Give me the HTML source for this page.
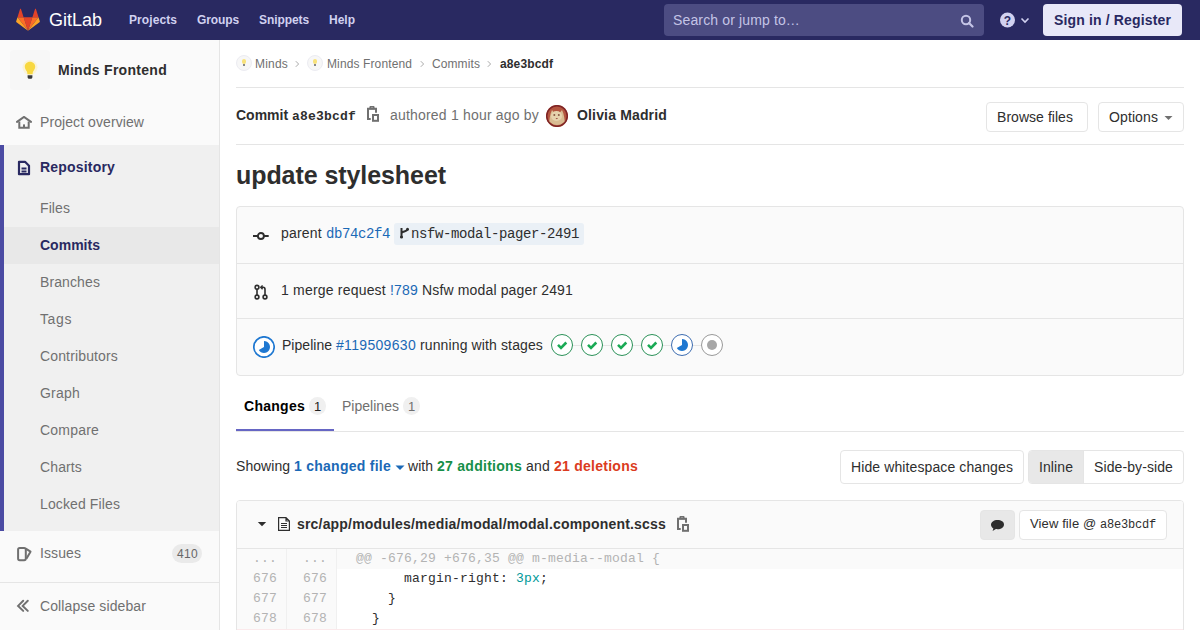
<!DOCTYPE html>
<html><head><meta charset="utf-8">
<style>
*{box-sizing:border-box;margin:0;padding:0}
html,body{width:1200px;height:630px;overflow:hidden;background:#fff}
body{font-family:"Liberation Sans",sans-serif;font-size:14px;color:#2e2e2e;position:relative}
.a{position:absolute}
.p{position:absolute;white-space:pre;line-height:20px}
.m{font-family:"Liberation Mono",monospace}
.b{font-weight:bold}
.s12{font-size:12px}.s13{font-size:13px}
.g{color:#707070}
.lk{color:#1b69b6}
.nav{color:#d1d1f0;font-weight:bold;font-size:12px;top:10px}
.hr{position:absolute;left:236px;width:948px;height:1px;background:#e5e5e5}
.btn{position:absolute;border:1px solid #e5e5e5;border-radius:4px;background:#fff}
.si{left:40px;color:#707070}
.stage{position:absolute;top:334px;width:22px;height:22px}
.ln{position:absolute;width:50px;text-align:right;color:#b3b3b3}
</style></head><body>
<!-- ===== HEADER ===== -->
<div class="a" style="left:0;top:0;width:1200px;height:40px;background:#292961"></div>
<svg class="a" style="left:16px;top:8px" width="24" height="23" viewBox="0 0 36 34.6">
  <path fill="#e24329" d="M18 34.1l6.6-20.3H11.4z"></path>
  <path fill="#fc6d26" d="M18 34.1L11.4 13.8H2.2z"></path>
  <path fill="#fca326" d="M2.2 13.8L.2 20c-.2.6 0 1.2.5 1.5L18 34.1z"></path>
  <path fill="#e24329" d="M2.2 13.8h9.2L7.4 1.6c-.2-.6-1.1-.6-1.3 0z"></path>
  <path fill="#fc6d26" d="M18 34.1l6.6-20.3h9.2z"></path>
  <path fill="#fca326" d="M33.8 13.8l2 6.2c.2.6 0 1.2-.5 1.5L18 34.1z"></path>
  <path fill="#e24329" d="M33.8 13.8h-9.2l4-12.2c.2-.6 1.1-.6 1.3 0z"></path>
</svg>
<div class="p t" style="left: 49px; top: 10px; color: rgb(255, 255, 255); font-size: 18px; letter-spacing: -0.008px;">GitLab</div>
<div class="p t nav" style="left: 129px; letter-spacing: 0.08px;">Projects</div>
<div class="p t nav" style="left: 197px; letter-spacing: -0.112px;">Groups</div>
<div class="p t nav" style="left: 259px; letter-spacing: -0.084px;">Snippets</div>
<div class="p t nav" style="left: 329px; letter-spacing: -0.004px;">Help</div>
<div class="a" style="left:664px;top:4px;width:320px;height:32px;background:#4c4c82;border-radius:4px"></div>
<div class="p t" style="left: 673px; top: 10px; color: rgb(196, 196, 230); letter-spacing: 0.139px;">Search or jump to…</div>
<svg class="a" style="left:960px;top:14px" width="14" height="14" viewBox="0 0 14 14"><circle cx="6" cy="6" r="4.2" fill="none" stroke="#c4c4e6" stroke-width="2"></circle><path d="M9 9l3.5 3.5" stroke="#c4c4e6" stroke-width="2.2" stroke-linecap="round"></path></svg>
<svg class="a" style="left:999px;top:12px" width="34" height="16" viewBox="0 0 34 16"><circle cx="8.5" cy="8" r="7.5" fill="#d1d1f0"></circle><text x="8.5" y="12.5" text-anchor="middle" font-family="Liberation Sans" font-weight="bold" font-size="12" fill="#292961">?</text><path d="M22.5 6.5l3.5 3.5 3.5-3.5" fill="none" stroke="#d1d1f0" stroke-width="1.6"></path></svg>
<div class="a" style="left:1043px;top:4px;width:139px;height:32px;background:#e8e8f8;border-radius:4px"></div>
<div class="p t b" style="left: 1054px; top: 10px; color: rgb(41, 41, 97); letter-spacing: 0.147px;">Sign in / Register</div>

<!-- ===== SIDEBAR ===== -->
<div class="a" style="left:0;top:40px;width:220px;height:590px;background:#fafafa;border-right:1px solid #e5e5e5"></div>
<div class="a" style="left:10px;top:50px;width:40px;height:40px;background:#f7f7f7;border-radius:4px"></div>
<svg class="a" style="left:22px;top:60px" width="16" height="20" viewBox="0 0 16 20"><circle cx="8" cy="7.5" r="7.5" fill="#fbf0c0" opacity=".6"></circle><path d="M8 1.8c3.2 0 5.2 2.4 5.2 5 0 2.2-1.5 3.5-2.2 5-.3.7-.4 1.5-.4 2.4H5.4c0-.9-.1-1.7-.4-2.4C4.3 10.3 2.8 9 2.8 6.8 2.8 4.2 4.8 1.8 8 1.8z" fill="#f8d840"></path><path d="M5.6 15.2h4.8v2.1c0 .8-.7 1.5-1.5 1.5H7.1c-.8 0-1.5-.7-1.5-1.5z" fill="#3a3a3a"></path></svg>
<div class="p t b" style="left: 58px; top: 60px; letter-spacing: 0.286px;">Minds Frontend</div>
<svg class="a" style="left:16px;top:116px" width="16" height="15" viewBox="0 0 16 15"><path d="M3.3 5.6V11.8H12.7V5.6" fill="none" stroke="#707070" stroke-width="2"></path><path d="M1 5.9L8 0.9 15 5.9" fill="none" stroke="#707070" stroke-width="2" stroke-linecap="round"></path><rect x="7" y="8.4" width="2" height="3.6" fill="#707070"></rect></svg>
<div class="p t si" style="top: 112px; letter-spacing: 0.081px;">Project overview</div>
<div class="a" style="left:0;top:145px;width:219px;height:386px;background:#f0f0f0"></div>
<div class="a" style="left:0;top:145px;width:4px;height:386px;background:#4b4ba3"></div>
<div class="a" style="left:4px;top:227px;width:215px;height:37px;background:#e8e8e8"></div>
<svg class="a" style="left:17px;top:160px" width="14" height="16" viewBox="0 0 14 16"><path d="M2 1.8h6l4 4V14.2H2z" fill="none" stroke="#292961" stroke-width="2.2" stroke-linejoin="round"></path><path d="M4.5 8.5h5M4.5 11.5h5" stroke="#292961" stroke-width="1.8"></path></svg>
<div class="p t b" style="left: 40px; top: 157px; color: rgb(41, 41, 97); letter-spacing: 0.188px;">Repository</div>
<div class="p t si" style="top: 198px; letter-spacing: 0.087px;">Files</div>
<div class="p t b" style="left: 40px; top: 235px; color: rgb(41, 41, 97); letter-spacing: 0.013px;">Commits</div>
<div class="p t si" style="top: 272px; letter-spacing: 0.105px;">Branches</div>
<div class="p t si" style="top: 309px; letter-spacing: 0.602px;">Tags</div>
<div class="p t si" style="top: 346px; letter-spacing: 0.145px;">Contributors</div>
<div class="p t si" style="top: 383px; letter-spacing: 0.216px;">Graph</div>
<div class="p t si" style="top: 420px; letter-spacing: 0.201px;">Compare</div>
<div class="p t si" style="top: 457px; letter-spacing: 0.128px;">Charts</div>
<div class="p t si" style="top: 494px; letter-spacing: 0.117px;">Locked Files</div>
<svg class="a" style="left:16px;top:546px" width="16" height="16" viewBox="0 0 16 16"><rect x="2.1" y="2" width="7.7" height="12.2" rx="1.6" fill="none" stroke="#707070" stroke-width="2"></rect><path d="M9.8 2.6L14.5 5.7 10.4 12.8" fill="none" stroke="#707070" stroke-width="2" stroke-linejoin="round"></path></svg>
<div class="p t si" style="top: 543px; letter-spacing: 0.089px;">Issues</div>
<div class="a" style="left:172px;top:544px;width:30px;height:19px;border-radius:10px;background:#eaeaea"></div>
<div class="p t s12" style="left: 177px; top: 544px; color: rgb(102, 102, 102); letter-spacing: 0.323px;">410</div>
<div class="a" style="left:0;top:582px;width:219px;height:1px;background:#e5e5e5"></div>
<svg class="a" style="left:16px;top:599px" width="16" height="14" viewBox="0 0 16 14"><path d="M7.2 1.8L2.1 6.9 7.2 11.9M11.8 1.8L6.7 6.9 11.8 11.9" fill="none" stroke="#707070" stroke-width="2" stroke-linecap="round"></path></svg>
<div class="p t si" style="top: 596px; letter-spacing: 0.106px;">Collapse sidebar</div>

<!-- ===== BREADCRUMB ===== -->
<div class="a" style="left:236px;top:55px;width:16px;height:16px;border-radius:50%;background:#f7f7f7;border:1px solid #ececf2"></div>
<div class="a" style="left:242px;top:59px;width:4px;height:5px;border-radius:2px;background:#f8e27a"></div>
<div class="a" style="left:243px;top:64px;width:2px;height:2px;background:#888"></div>
<div class="p t s12 g" style="left: 255px; top: 54px; letter-spacing: 0.197px;">Minds</div>
<svg class="a" style="left:294px;top:60px" width="6" height="8" viewBox="0 0 6 8"><path d="M1.8 1.2l2.8 2.8-2.8 2.8" fill="none" stroke="#aaa" stroke-width="1"></path></svg>
<div class="a" style="left:307px;top:55px;width:16px;height:16px;border-radius:50%;background:#f7f7f7;border:1px solid #ececf2"></div>
<div class="a" style="left:313px;top:59px;width:4px;height:5px;border-radius:2px;background:#f8e27a"></div>
<div class="a" style="left:314px;top:64px;width:2px;height:2px;background:#888"></div>
<div class="p t s12 g" style="left: 327px; top: 54px; letter-spacing: 0.116px;">Minds Frontend</div>
<svg class="a" style="left:419px;top:60px" width="6" height="8" viewBox="0 0 6 8"><path d="M1.8 1.2l2.8 2.8-2.8 2.8" fill="none" stroke="#aaa" stroke-width="1"></path></svg>
<div class="p t s12 g" style="left: 432px; top: 54px; letter-spacing: 0.094px;">Commits</div>
<svg class="a" style="left:486px;top:60px" width="6" height="8" viewBox="0 0 6 8"><path d="M1.8 1.2l2.8 2.8-2.8 2.8" fill="none" stroke="#aaa" stroke-width="1"></path></svg>
<div class="p t s12 b" style="left: 500px; top: 54px; letter-spacing: 0.121px;">a8e3bcdf</div>
<div class="hr" style="top:87px"></div>

<!-- ===== COMMIT HEADER ===== -->
<div class="p b" style="left:236px;top:105px"><span class="t" style="letter-spacing: 0px;">Commit </span><span class="t m" style="font-size: 13px; letter-spacing: 0.197px;">a8e3bcdf</span></div>
<svg class="a" style="left:366px;top:105px" width="14" height="18" viewBox="0 0 14 18"><path d="M4.7 14H2V3.7h8v4" fill="none" stroke="#707070" stroke-width="2"></path><path fill-rule="evenodd" fill="#707070" d="M3.4 4.6V2.2c0-.7.5-1.2 1.2-1.2h2.8c.7 0 1.2.5 1.2 1.2v2.4zM5.3 2.4v1.3h1.4V2.4z"></path><rect x="7" y="10" width="5" height="5.8" fill="none" stroke="#707070" stroke-width="2"></rect></svg>
<div class="p t g" style="left: 390px; top: 105px; letter-spacing: 0.192px;">authored 1 hour ago by</div>
<svg class="a" style="left:546px;top:105px" width="22" height="22" viewBox="0 0 22 22"><defs><clipPath id="av"><circle cx="11" cy="11" r="11"></circle></clipPath></defs><g clip-path="url(#av)"><rect width="22" height="22" fill="#b4553f"></rect><path d="M3 22C3 15 4 9 6 5l2.5 3h5L16 5c2 4 3 10 3 17z" fill="#d9bc92"></path><ellipse cx="10.5" cy="11" rx="5.5" ry="5" fill="#e6d3ad"></ellipse><circle cx="8.3" cy="10" r="1" fill="#8a5a45"></circle><circle cx="12.8" cy="10" r="1" fill="#8a5a45"></circle><path d="M9.5 13h2.5l-1.2 1.3z" fill="#9a4a40"></path><path d="M4 17c2 2 4 3 7 3s5-1 7-3v5H4z" fill="#c07050"></path></g><circle cx="11" cy="11" r="10.3" fill="none" stroke="#7e2426" stroke-width="1.5"></circle></svg>
<div class="p t b" style="left: 577px; top: 105px; letter-spacing: 0.16px;">Olivia Madrid</div>
<div class="btn" style="left:986px;top:102px;width:102px;height:30px"></div>
<div class="p t" style="left: 997px; top: 107px; letter-spacing: 0.044px;">Browse files</div>
<div class="btn" style="left:1098px;top:102px;width:86px;height:30px"></div>
<div class="p t" style="left: 1109px; top: 107px; letter-spacing: 0.107px;">Options</div>
<svg class="a" style="left:1164px;top:115px" width="9" height="6" viewBox="0 0 9 6"><path d="M0.5 1h8L4.5 5z" fill="#707070"></path></svg>
<div class="hr" style="top:144px"></div>

<div class="p t b" style="left: 236px; top: 165px; font-size: 25px; letter-spacing: -0.07px;">update stylesheet</div>

<!-- ===== INFO BOX ===== -->
<div class="a" style="left:236px;top:206px;width:948px;height:170px;background:#fafafa;border:1px solid #e5e5e5;border-radius:4px"></div>
<div class="a" style="left:237px;top:263px;width:946px;height:1px;background:#e5e5e5"></div>
<div class="a" style="left:237px;top:318px;width:946px;height:1px;background:#e5e5e5"></div>
<svg class="a" style="left:252px;top:230px" width="18" height="12" viewBox="0 0 18 12"><circle cx="8.9" cy="6" r="3" fill="none" stroke="#2e2e2e" stroke-width="1.9"></circle><path d="M1 6h4.9M11.9 6H16.7" stroke="#2e2e2e" stroke-width="1.9"></path></svg>
<div class="p" style="left:281px;top:223px"><span class="t" style="letter-spacing: 0.201px;">parent </span><span class="t m lk" style="letter-spacing: -0.402px;">db74c2f4</span></div>
<div class="a" style="left:394px;top:223px;width:190px;height:22px;background:#eaf0f6;border-radius:3px"></div>
<svg class="a" style="left:399px;top:227px" width="12" height="12" viewBox="0 0 12 12"><path d="M2.5 1v10M2.5 6.5c0-2.5 6-1.5 6-4.5" fill="none" stroke="#2e2e2e" stroke-width="2"></path><circle cx="8.5" cy="2.2" r="1.5" fill="#2e2e2e"></circle><circle cx="2.5" cy="10" r="1.5" fill="#2e2e2e"></circle></svg>
<div class="p t m" style="left: 411px; top: 224px; color: rgb(46, 46, 46); letter-spacing: -0.402px;">nsfw-modal-pager-2491</div>

<svg class="a" style="left:253px;top:283px" width="16" height="18" viewBox="0 0 16 18"><circle cx="4" cy="4.3" r="1.9" fill="none" stroke="#2e2e2e" stroke-width="1.6"></circle><circle cx="4" cy="14" r="1.9" fill="none" stroke="#2e2e2e" stroke-width="1.6"></circle><circle cx="12" cy="14" r="1.9" fill="none" stroke="#2e2e2e" stroke-width="1.6"></circle><path d="M4 6.2v5.9M12 12.1V6.3c0-1.2-.7-2-2-2H8.4" fill="none" stroke="#2e2e2e" stroke-width="1.6"></path><path d="M9.6 2.4L7.8 4.3l1.8 1.9" fill="none" stroke="#2e2e2e" stroke-width="1.5"></path></svg>
<div class="p" style="left:281px;top:280px"><span class="t" style="letter-spacing: 0.197px;">1 merge request </span><span class="t lk" style="letter-spacing: 0.188px;">!789</span><span class="t" style="letter-spacing: 0.147px;"> Nsfw modal pager 2491</span></div>

<svg class="a" style="left:253px;top:336px" width="22" height="22" viewBox="0 0 22 22"><circle cx="11" cy="11" r="10.2" fill="#fff" stroke="#1f78d1" stroke-width="1.7"></circle><path d="M11 11V5A6 6 0 1 1 5.8 14z" fill="#1f78d1"></path></svg>
<div class="p" style="left:282px;top:335px"><span class="t" style="letter-spacing: 0.033px;">Pipeline </span><span class="t lk" style="letter-spacing: 0.316px;">#119509630</span><span class="t" style="letter-spacing: 0.123px;"> running with stages</span></div>
<div class="a" style="left:562px;top:345px;width:150px;height:1px;background:#e5e5e5"></div>
<svg class="stage" style="left:551px" viewBox="0 0 22 22"><circle cx="11" cy="11" r="10.5" fill="#fff" stroke="#2b9158" stroke-width="1"></circle><path d="M7 10.8l3 3 5.3-5.3" fill="none" stroke="#1aaa55" stroke-width="2.6"></path></svg>
<svg class="stage" style="left:581px" viewBox="0 0 22 22"><circle cx="11" cy="11" r="10.5" fill="#fff" stroke="#2b9158" stroke-width="1"></circle><path d="M7 10.8l3 3 5.3-5.3" fill="none" stroke="#1aaa55" stroke-width="2.6"></path></svg>
<svg class="stage" style="left:611px" viewBox="0 0 22 22"><circle cx="11" cy="11" r="10.5" fill="#fff" stroke="#2b9158" stroke-width="1"></circle><path d="M7 10.8l3 3 5.3-5.3" fill="none" stroke="#1aaa55" stroke-width="2.6"></path></svg>
<svg class="stage" style="left:641px" viewBox="0 0 22 22"><circle cx="11" cy="11" r="10.5" fill="#fff" stroke="#2b9158" stroke-width="1"></circle><path d="M7 10.8l3 3 5.3-5.3" fill="none" stroke="#1aaa55" stroke-width="2.6"></path></svg>
<svg class="stage" style="left:671px" viewBox="0 0 22 22"><circle cx="11" cy="11" r="10.5" fill="#fff" stroke="#3d6cb0" stroke-width="1"></circle><path d="M11 11V5A6 6 0 1 1 5.8 14z" fill="#1f78d1"></path></svg>
<svg class="stage" style="left:701px" viewBox="0 0 22 22"><circle cx="11" cy="11" r="10.5" fill="#fff" stroke="#999" stroke-width="1"></circle><circle cx="11" cy="11" r="5" fill="#a7a7a7"></circle></svg>

<!-- ===== TABS ===== -->
<div class="p t b" style="left: 244px; top: 396px; color: rgb(0, 0, 0); letter-spacing: 0.268px;">Changes</div>
<div class="a" style="left:309px;top:397px;width:17px;height:18px;border-radius:9px;background:#f0f0f0"></div>
<div class="p t" style="left: 314px; top: 397px; font-size: 13px; color: rgb(34, 34, 34); letter-spacing: -0.234px;">1</div>
<div class="p t g" style="left: 342px; top: 396px; letter-spacing: 0.019px;">Pipelines</div>
<div class="a" style="left:403px;top:397px;width:17px;height:18px;border-radius:9px;background:#f0f0f0"></div>
<div class="p t g" style="left: 408px; top: 397px; font-size: 13px; letter-spacing: -0.234px;">1</div>
<div class="hr" style="top:431px"></div>
<div class="a" style="left:236px;top:429px;width:98px;height:2px;background:#6666c4"></div>

<div class="p" style="left:236px;top:456px"><span class="t" style="letter-spacing: 0.051px;">Showing </span><span class="t b" style="color: rgb(27, 105, 182); letter-spacing: 0.26px;">1 changed file</span></div>
<svg class="a" style="left:395px;top:465px" width="10" height="6" viewBox="0 0 10 6"><path d="M0.5 0.5h9L5 5z" fill="#1b69b6"></path></svg>
<div class="p" style="left:408px;top:456px"><span class="t" style="letter-spacing: 0.041px;">with </span><span class="t b" style="color: rgb(22, 143, 72); letter-spacing: 0.276px;">27 additions</span><span class="t" style="letter-spacing: 0.172px;"> and </span><span class="t b" style="color: rgb(219, 59, 33); letter-spacing: 0.257px;">21 deletions</span></div>
<div class="btn" style="left:840px;top:450px;width:184px;height:34px"></div>
<div class="p t" style="left: 851px; top: 457px; letter-spacing: 0.107px;">Hide whitespace changes</div>
<div class="btn" style="left:1028px;top:450px;width:156px;height:34px"></div>
<div class="a" style="left:1029px;top:451px;width:55px;height:32px;background:#e8e8e8;border-right:1px solid #e5e5e5;border-radius:3px 0 0 3px"></div>
<div class="p t" style="left: 1039px; top: 457px; letter-spacing: 0.089px;">Inline</div>
<div class="p t" style="left: 1094px; top: 457px; letter-spacing: 0.098px;">Side-by-side</div>

<!-- ===== FILE ===== -->
<div class="a" style="left:236px;top:500px;width:948px;height:140px;border:1px solid #e5e5e5;border-radius:4px;background:#fff"></div>
<div class="a" style="left:237px;top:501px;width:946px;height:48px;background:#fafafa;border-bottom:1px solid #e5e5e5;border-radius:3px 3px 0 0"></div>
<svg class="a" style="left:257px;top:521px" width="10" height="6" viewBox="0 0 10 6"><path d="M0.8 1h8.4L5 5.2z" fill="#2e2e2e"></path></svg>
<svg class="a" style="left:277px;top:516px" width="14" height="16" viewBox="0 0 14 16"><path d="M1.6 1.6h7.4l3.4 3.4V14.4H1.6z M9 1.6V5h3.4" fill="none" stroke="#2e2e2e" stroke-width="1.2"></path><path d="M4 7.5h6M4 9.5h6M4 11.5h6" stroke="#2e2e2e" stroke-width="1"></path></svg>
<div class="p t b" style="left: 297px; top: 514px; letter-spacing: 0.183px;">src/app/modules/media/modal/modal.component.scss</div>
<svg class="a" style="left:676px;top:515px" width="14" height="18" viewBox="0 0 14 18"><path d="M4.7 14H2V3.7h8v4" fill="none" stroke="#707070" stroke-width="2"></path><path fill-rule="evenodd" fill="#707070" d="M3.4 4.6V2.2c0-.7.5-1.2 1.2-1.2h2.8c.7 0 1.2.5 1.2 1.2v2.4zM5.3 2.4v1.3h1.4V2.4z"></path><rect x="7" y="10" width="5" height="5.8" fill="none" stroke="#707070" stroke-width="2"></rect></svg>
<div class="btn" style="left:980px;top:510px;width:35px;height:30px;background:#e8e8e8"></div>
<svg class="a" style="left:990px;top:519px" width="15" height="13" viewBox="0 0 15 13"><path d="M7.5 1C3.9 1 1 3.1 1 5.8c0 1.5.9 2.8 2.4 3.7L2.6 12l3.3-1.9c.5.1 1 .1 1.6.1 3.6 0 6.5-2.1 6.5-4.8S11.1 1 7.5 1z" fill="#2e2e2e"></path></svg>
<div class="btn" style="left:1019px;top:510px;width:148px;height:30px"></div>
<div class="p s13" style="left:1030px;top:514px"><span class="t" style="letter-spacing: 0.117px;">View file @ </span><span class="t m s12" style="letter-spacing: -0.201px;">a8e3bcdf</span></div>

<!-- code -->
<div class="a" style="left:237px;top:549px;width:946px;height:20px;background:#fafafa"></div>
<div class="a" style="left:237px;top:569px;width:99px;height:61px;background:#fafafa"></div>
<div class="a" style="left:286px;top:549px;width:1px;height:81px;background:#f0f0f0"></div>
<div class="a" style="left:336px;top:549px;width:1px;height:81px;background:#f0f0f0"></div>
<div class="a" style="left:237px;top:629px;width:946px;height:1px;background:#fbe9eb"></div>
<div class="p t m s13 ln" style="left: 227px; top: 549px; letter-spacing: 0.198px;">...</div>
<div class="p t m s13 ln" style="left: 277px; top: 549px; letter-spacing: 0.198px;">...</div>
<div class="p t m s13 ln" style="left: 227px; top: 569px; letter-spacing: 0.198px;">676</div>
<div class="p t m s13 ln" style="left: 277px; top: 569px; letter-spacing: 0.198px;">676</div>
<div class="p t m s13 ln" style="left: 227px; top: 589px; letter-spacing: 0.198px;">677</div>
<div class="p t m s13 ln" style="left: 277px; top: 589px; letter-spacing: 0.198px;">677</div>
<div class="p t m s13 ln" style="left: 227px; top: 609px; letter-spacing: 0.198px;">678</div>
<div class="p t m s13 ln" style="left: 277px; top: 609px; letter-spacing: 0.198px;">678</div>
<div class="p t m s13" style="left: 356px; top: 549px; color: rgb(179, 179, 179); letter-spacing: 0.199px;">@@ -676,29 +676,35 @@ m-media--modal {</div>
<div class="p m s13" style="left:404px;top:569px"><span class="t" style="letter-spacing: 0.199px;">margin-right: </span><span class="t" style="color: rgb(0, 153, 153); letter-spacing: 0.198px;">3px</span><span class="t" style="letter-spacing: 0.188px;">;</span></div>
<div class="p t m s13" style="left: 388px; top: 589px; letter-spacing: 0.188px;">}</div>
<div class="p t m s13" style="left: 372px; top: 609px; letter-spacing: 0.188px;">}</div>

</body></html>
